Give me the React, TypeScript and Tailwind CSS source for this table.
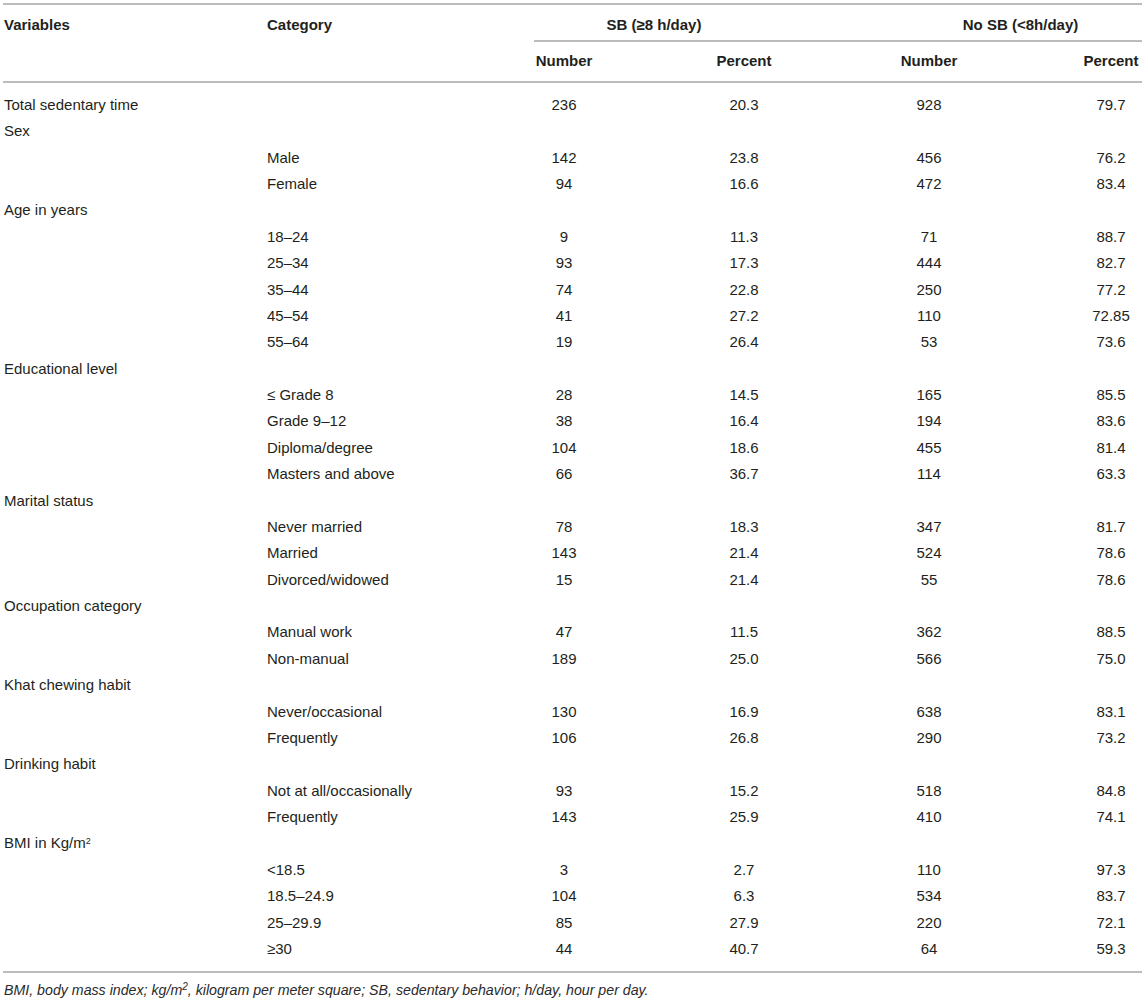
import React from "react";

type Row = { v?: React.ReactNode; c?: React.ReactNode; d?: [string, string, string, string] };

const rows: Row[] = [
  { v: "Total sedentary time", d: ["236", "20.3", "928", "79.7"] },
  { v: "Sex" },
  { c: "Male", d: ["142", "23.8", "456", "76.2"] },
  { c: "Female", d: ["94", "16.6", "472", "83.4"] },
  { v: "Age in years" },
  { c: "18–24", d: ["9", "11.3", "71", "88.7"] },
  { c: "25–34", d: ["93", "17.3", "444", "82.7"] },
  { c: "35–44", d: ["74", "22.8", "250", "77.2"] },
  { c: "45–54", d: ["41", "27.2", "110", "72.85"] },
  { c: "55–64", d: ["19", "26.4", "53", "73.6"] },
  { v: "Educational level" },
  { c: "≤ Grade 8", d: ["28", "14.5", "165", "85.5"] },
  { c: "Grade 9–12", d: ["38", "16.4", "194", "83.6"] },
  { c: "Diploma/degree", d: ["104", "18.6", "455", "81.4"] },
  { c: "Masters and above", d: ["66", "36.7", "114", "63.3"] },
  { v: "Marital status" },
  { c: "Never married", d: ["78", "18.3", "347", "81.7"] },
  { c: "Married", d: ["143", "21.4", "524", "78.6"] },
  { c: "Divorced/widowed", d: ["15", "21.4", "55", "78.6"] },
  { v: "Occupation category" },
  { c: "Manual work", d: ["47", "11.5", "362", "88.5"] },
  { c: "Non-manual", d: ["189", "25.0", "566", "75.0"] },
  { v: "Khat chewing habit" },
  { c: "Never/occasional", d: ["130", "16.9", "638", "83.1"] },
  { c: "Frequently", d: ["106", "26.8", "290", "73.2"] },
  { v: "Drinking habit" },
  { c: "Not at all/occasionally", d: ["93", "15.2", "518", "84.8"] },
  { c: "Frequently", d: ["143", "25.9", "410", "74.1"] },
  {
    v: (
      <>
        BMI in Kg/m<sup className="text-[9px]">2</sup>
      </>
    ),
  },
  { c: "<18.5", d: ["3", "2.7", "110", "97.3"] },
  { c: "18.5–24.9", d: ["104", "6.3", "534", "83.7"] },
  { c: "25–29.9", d: ["85", "27.9", "220", "72.1"] },
  { c: "≥30", d: ["44", "40.7", "64", "59.3"] },
];

const grid =
  "grid grid-cols-[264px_267px_60px_120px_60px_125px_60px_121px_62px]";

export default function App() {
  return (
    <div
      className="w-[1146px] h-[1002px] bg-white text-[#231f20] text-[15px]"
      style={{ fontFamily: '"Liberation Sans", Arial, sans-serif' }}
    >
      <div className="ml-[3px] w-[1139px] pt-[3px]">
        <div className="h-[2px] bg-[#bcbcbc]" />
        {/* header row 1 */}
        <div className={`${grid} h-[35px] pt-[5px] items-center font-bold`}>
          <div className="col-start-1 pl-[1px]">Variables</div>
          <div className="col-start-2">Category</div>
          <div className="col-start-3 col-end-6 text-center">SB (≥8 h/day)</div>
          <div className="col-start-7 col-end-10 text-center">No SB (&lt;8h/day)</div>
        </div>
        <div className={grid}>
          <div className="col-start-3 col-end-10 h-[2px] bg-[#bcbcbc]" />
        </div>
        {/* header row 2 */}
        <div className={`${grid} h-[39px] items-center font-bold`}>
          <div className="col-start-3 flex justify-center whitespace-nowrap">Number</div>
          <div className="col-start-5 flex justify-center whitespace-nowrap">Percent</div>
          <div className="col-start-7 flex justify-center whitespace-nowrap">Number</div>
          <div className="col-start-9 flex justify-center whitespace-nowrap">Percent</div>
        </div>
        <div className="h-[2px] bg-[#bcbcbc]" />
        {/* body */}
        <div className="pt-[9px] pb-[9px]">
          {rows.map((r, i) => (
            <div key={i} className={`${grid} h-[26.375px] items-center`}>
              <div className="col-start-1 pl-[1px] whitespace-nowrap">{r.v}</div>
              <div className="col-start-2 whitespace-nowrap">{r.c}</div>
              {r.d && (
                <>
                  <div className="col-start-3 flex justify-center">{r.d[0]}</div>
                  <div className="col-start-5 flex justify-center">{r.d[1]}</div>
                  <div className="col-start-7 flex justify-center">{r.d[2]}</div>
                  <div className="col-start-9 flex justify-center">{r.d[3]}</div>
                </>
              )}
            </div>
          ))}
        </div>
        <div className="h-[2px] bg-[#bcbcbc]" />
        <div className="pt-[7px] pl-[1px] italic text-[14.2px] text-[#2a2a2a]">
          BMI, body mass index; kg/m<sup className="text-[10px]">2</sup>, kilogram per meter
          square; SB, sedentary behavior; h/day, hour per day.
        </div>
      </div>
    </div>
  );
}
